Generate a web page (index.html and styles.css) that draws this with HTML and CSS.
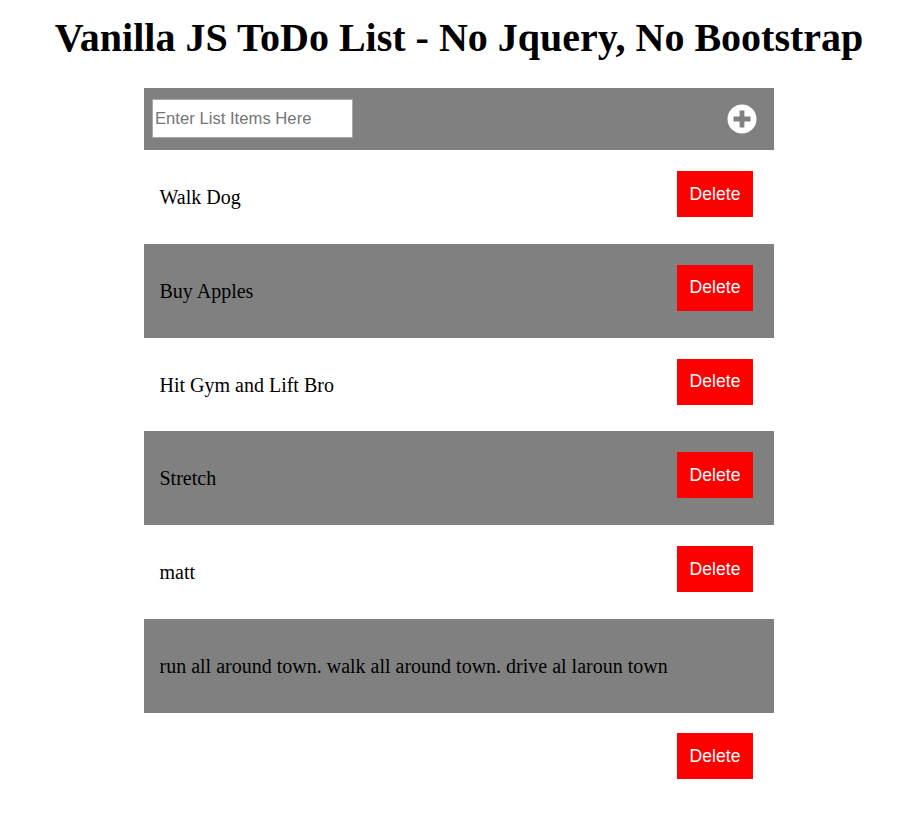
FILE: index.html
```html
<!DOCTYPE html>
<html lang="en">
<head>
    <meta charset="UTF-8">
    <meta name="viewport" content="width=device-width, initial-scale=1.0">
    <title>Vanilla JS ToDo List</title>
    <link rel="stylesheet" href="styles.css">
</head>
<body>
    <h1>Vanilla JS ToDo List - No Jquery, No Bootstrap</h1>

    <div class="todo">
        <div class="todo-header">
            <input type="text" class="todo-input" placeholder="Enter List Items Here">
            <svg class="add-icon" viewBox="0 0 30 30" aria-hidden="true">
                <circle cx="15" cy="15" r="14.5" fill="#fff"/>
                <path d="M12.6 6.5h4.8v6.1h6.1v4.8h-6.1v6.1h-4.8v-6.1H6.5v-4.8h6.1z" fill="#808080"/>
            </svg>
        </div>
        <ul class="todo-list">
            <li class="todo-item"><span class="todo-text">Walk Dog</span><button class="delete-btn">Delete</button></li>
            <li class="todo-item"><span class="todo-text">Buy Apples</span><button class="delete-btn">Delete</button></li>
            <li class="todo-item"><span class="todo-text">Hit Gym and Lift Bro</span><button class="delete-btn">Delete</button></li>
            <li class="todo-item"><span class="todo-text">Stretch</span><button class="delete-btn">Delete</button></li>
            <li class="todo-item"><span class="todo-text">matt</span><button class="delete-btn">Delete</button></li>
            <li class="todo-item"><span class="todo-text">run all around town. walk all around town. drive al laroun town</span><button class="delete-btn">Delete</button></li>
        </ul>
    </div>
</body>
</html>
```

FILE: styles.css
```css
body {
    margin: 0;
    padding-left: 16px;
    font-family: "Liberation Serif", "Times New Roman", serif;
    color: black;
    background-color: white;
}
h1 {
    margin: 0;
    padding: 13px 0 26px;
    font-size: 40px;
    line-height: 49px;
    font-weight: bold;
    text-align: center;
}
.todo {
    width: 630px;
    margin: 0 auto;
}
.todo-header {
    display: flex;
    align-items: center;
    justify-content: space-between;
    height: 62px;
    padding: 0 17px 0 8px;
    box-sizing: border-box;
    background-color: gray;
}
.todo-input {
    width: 201px;
    height: 39px;
    margin-bottom: 1px;
    padding: 1px 2px;
    box-sizing: border-box;
    border: 1px solid #a9a9a9;
    border-radius: 0;
    outline: none;
    font-family: "Liberation Sans", Arial, sans-serif;
    font-size: 16.67px;
}
.todo-input::placeholder {
    color: #757575;
}
.add-icon {
    display: block;
    width: 30px;
    height: 30px;
}
.todo-list {
    margin: 0;
    padding: 0;
    list-style: none;
}
.todo-item {
    height: 93.75px;
    font-size: 20px;
    line-height: 23px;
}
.todo-item:nth-child(even) {
    background-color: gray;
}
.todo-text {
    display: inline-block;
    margin-right: 21px;
    padding: 36px 0 34.6px 15.5px;
}
.delete-btn {
    float: right;
    width: 76px;
    height: 46px;
    margin: 21px 21px 0 0;
    padding: 0;
    border: none;
    border-radius: 0;
    background-color: red;
    color: white;
    font-family: "Liberation Sans", Arial, sans-serif;
    font-size: 17.6px;
}
```
